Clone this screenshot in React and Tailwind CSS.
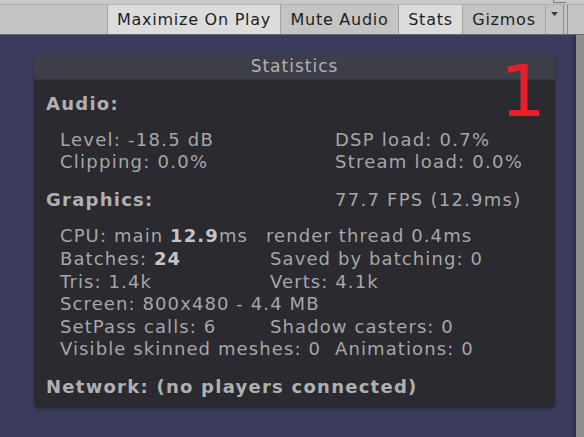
import React from "react";

const font = { fontFamily: '"DejaVu Sans", Verdana, sans-serif' };

function Row({ left, right, w = "w-[210px]" }) {
  return (
    <div className="flex whitespace-pre">
      <span className={`${w} shrink-0`}>{left}</span>
      {right ? <span>{right}</span> : null}
    </div>
  );
}

export default function App() {
  return (
    <div
      className="w-[584px] h-[437px] overflow-hidden flex flex-col bg-[#3b3c5d]"
      style={font}
    >
      {/* Toolbar */}
      <div className="relative h-[35px] shrink-0 bg-[#c4c4c4] border-b border-[#6a6a6a] flex flex-col">
        <div className="h-[5px] bg-[#c9c9c9] border-b border-[#b0b0b0]" />
        <div className="absolute top-[2px] left-[553px] w-[13px] h-[1px] bg-[#7a7a7a]" />
        <div className="absolute top-0 left-[553px] w-[1px] h-[3px] bg-[#7a7a7a]" />
        <div className="flex h-[29px] pl-[107px] text-[16px] tracking-[0.75px] text-[#1e1e1e]">
          <div className="w-[174px] flex items-center justify-center bg-[#dcdcdc] border-l border-r border-[#a0a0a0]">
            Maximize On Play
          </div>
          <div className="w-[118px] flex items-center justify-center bg-[#c4c4c4] border-r border-[#a0a0a0]">
            Mute Audio
          </div>
          <div className="w-[64px] flex items-center justify-center bg-[#dcdcdc] border-r border-[#a0a0a0]">
            Stats
          </div>
          <div className="w-[83px] flex items-center justify-center bg-[#c4c4c4] border-r border-[#a0a0a0]">
            Gizmos
          </div>
          <div className="w-[18px] flex items-start justify-center pt-[7px] bg-[#c4c4c4] border-r border-[#8e8e8e]">
            <svg width="7" height="4" viewBox="0 0 7 4">
              <path d="M0 0 L7 0 L3.5 4 Z" fill="#3a3a3a" />
            </svg>
          </div>
          <div className="w-[3px]" />
          <div className="w-[1px] bg-[#8a8a8a]" />
        </div>
      </div>

      {/* Body */}
      <div className="flex flex-1 min-h-0">
        <div className="flex-1 pl-[34px] pt-[20px]">
          <div className="relative w-[521px] h-[353px] rounded-[5px] flex flex-col bg-[#2a2a30] shadow-[0_1px_3px_rgba(0,0,0,0.35)]">
            <div className="h-[25px] shrink-0 rounded-t-[5px] bg-[#3e3e48] border-b border-[#34343c] flex items-center justify-center text-[17px] tracking-[1px] text-[#b2b2b2]">
              Statistics
            </div>
            <div className="absolute left-[466px] top-[0px] text-[72px] leading-[72px] text-[#e4212b]">
              1
            </div>
            <div className="flex flex-col pl-[12px] pt-[13px] text-[18px] leading-[22.6px] tracking-[1.25px] text-[#a7a7a7]">
              <div className="font-bold text-[#b0b0b0]">Audio:</div>
              <div className="mt-[13px] pl-[14px]">
                <Row left="Level: -18.5 dB" right="DSP load: 0.7%" w="w-[275px]" />
                <Row left="Clipping: 0.0%" right="Stream load: 0.0%" w="w-[275px]" />
              </div>
              <div className="mt-[15px] flex">
                <span className="w-[289px] font-bold text-[#b0b0b0]">Graphics:</span>
                <span>77.7 FPS (12.9ms)</span>
              </div>
              <div className="mt-[14px] pl-[14px] tracking-[1.1px]">
                <Row
                  w="w-[206px]"
                  left={
                    <>
                      CPU: main <b className="text-[#c4c4c4]">12.9</b>ms
                    </>
                  }
                  right="render thread 0.4ms"
                />
                <Row
                  left={
                    <>
                      Batches: <b className="text-[#c4c4c4]">24</b>
                    </>
                  }
                  right="Saved by batching: 0"
                />
                <Row left="Tris: 1.4k" right="Verts: 4.1k" />
                <Row left="Screen: 800x480 - 4.4 MB" w="w-auto" />
                <Row left="SetPass calls: 6" right="Shadow casters: 0" />
                <Row left="Visible skinned meshes: 0" right="Animations: 0" w="w-[275px]" />
              </div>
              <div className="mt-[15px] font-bold text-[#b0b0b0]">
                Network: (no players connected)
              </div>
            </div>
          </div>
        </div>
        <div className="w-[3px] bg-[#2f3050]" />
        <div className="w-[8px] bg-[#8e8e8e]" />
      </div>
    </div>
  );
}
